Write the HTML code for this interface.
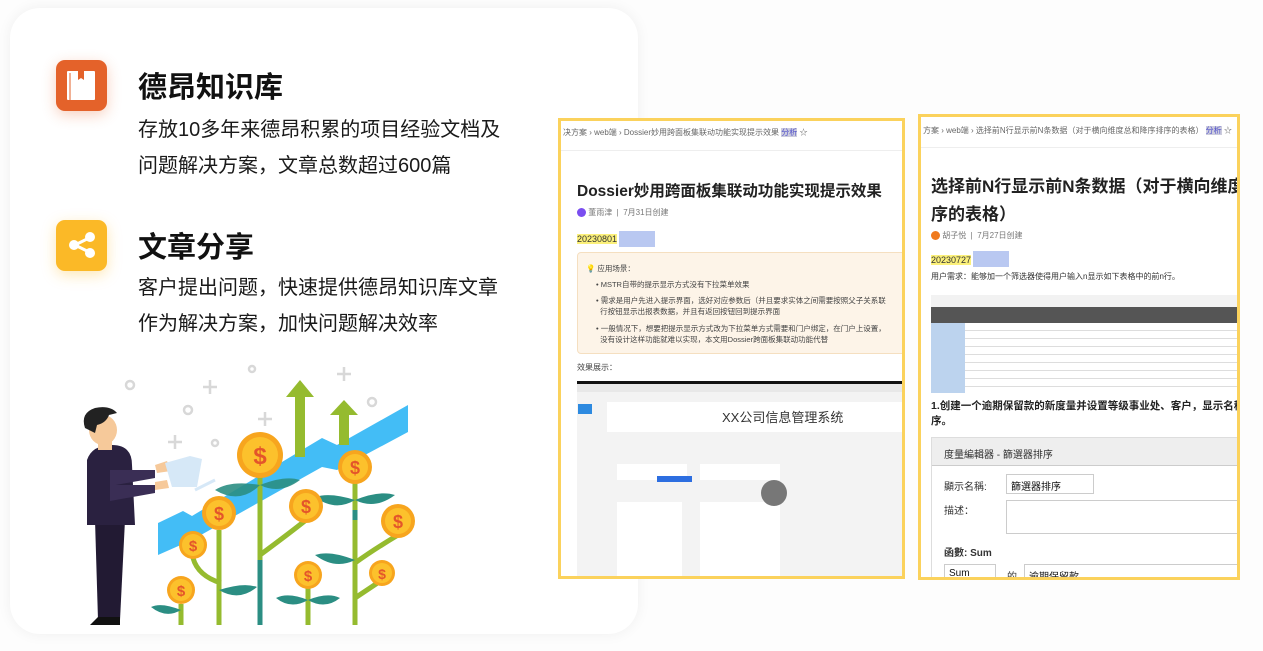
<!DOCTYPE html>
<html><head><meta charset="utf-8"><style>
*{margin:0;padding:0;box-sizing:border-box}
body{width:1263px;height:651px;background:#fdfdfd;font-family:"Liberation Sans","Noto Sans CJK SC",sans-serif;position:relative;overflow:hidden;color:#111}
.card{position:absolute;left:10px;top:8px;width:628px;height:626px;background:#fff;border-radius:30px;box-shadow:0 0 14px rgba(0,0,0,0.06)}
.ic{position:absolute;left:56px;width:51px;height:51px;border-radius:9px}
.h{position:absolute;left:138px;font-size:29px;font-weight:bold;letter-spacing:0px}
.p{position:absolute;left:138px;font-size:20px;line-height:36px;color:#1a1a1a}
.shot{position:absolute;border:3px solid #fbd25c;background:#fff;overflow:hidden;font-family:"Liberation Sans","Noto Sans CJK SC",sans-serif}
.s{position:absolute;white-space:nowrap}
</style></head><body>
<div class="card"></div>
<div class="ic" style="top:60px;background:#e4622a;box-shadow:0 4px 14px rgba(228,98,42,0.3)">
<svg width="51" height="51"><rect x="11" y="11" width="28" height="29" fill="#fff" rx="1"/><rect x="13" y="13" width="2" height="27" fill="#e4622a" opacity=".5"/><path d="M22 11v9l3-2 3 2v-9z" fill="#e4622a"/></svg></div>
<div class="h" style="top:64px">德昂知识库</div>
<div class="p" style="top:112px">存放10多年来德昂积累的项目经验文档及<br>问题解决方案，文章总数超过600篇</div>
<div class="ic" style="top:220px;background:#fbb927;box-shadow:0 4px 14px rgba(251,185,39,0.35)">
<svg width="51" height="51"><g fill="#fff" stroke="#fff" stroke-width="3"><line x1="19" y1="25" x2="33" y2="18"/><line x1="19" y1="25" x2="33" y2="32"/></g><circle cx="18" cy="25" r="5" fill="#fff"/><circle cx="34" cy="17" r="5" fill="#fff"/><circle cx="34" cy="33" r="5" fill="#fff"/></svg></div>
<div class="h" style="top:224px">文章分享</div>
<div class="p" style="top:270px">客户提出问题，快速提供德昂知识库文章<br>作为解决方案，加快问题解决效率</div>

<svg style="position:absolute;left:0;top:0" width="640" height="651">
<g fill="none" stroke="#d8d8d8" stroke-width="2.5">
<circle cx="130" cy="385" r="4"/><circle cx="188" cy="410" r="4"/><circle cx="215" cy="443" r="3"/><circle cx="252" cy="369" r="3"/><circle cx="372" cy="402" r="4"/>
<path d="M203 387h14M210 380v14M168 442h14M175 435v14M258 419h14M265 412v14M337 374h14M344 367v14"/></g>
<polygon points="158,523 183,511 192,516 322,438 337,445 408,405 408,432 337,470 322,467 192,540 158,555" fill="#43bdf6"/>
<path d="M300 380l-14 17h9v60h10v-60h9z" fill="#95bb2f"/>
<path d="M344 400l-14 15h9v30h10v-30h9z" fill="#95bb2f"/>
<g stroke="#95bb2f" stroke-width="5" fill="none">
<path d="M260 470V625M219 530V625M193 558q5 18 28 25M181 604V625M306 520q-15 12-46 35M355 480V625M398 535q-25 15-43 28M308 588V625M382 580q-12 8-27 18"/></g>
<g fill="#2b8e83"><path d="M260 485q-30-5-45 5q25 15 45-5zM260 485q25-10 40-5q-20 15-40 5z" opacity=".9"/>
<path d="M355 500q-25-8-40-3q20 15 40 3zM355 500q25-10 40-5q-20 15-40 5z"/>
<path d="M219 590q25-8 38-3q-18 15-38 3zM181 610q-20-8-30-3q15 12 30 3zM308 600q-20-8-32-2q15 12 32 2zM308 600q20-8 32-2q-15 12-32 2zM355 560q-25-10-40-5q20 15 40 5z"/></g>
<g stroke="#2b8e83" stroke-width="5"><path d="M260 560V625M355 510V520"/></g>
<g font-family="Liberation Sans" font-weight="bold" fill="#e4552a" text-anchor="middle">
<g><circle cx="260" cy="455" r="23" fill="#f7a51e"/><circle cx="260" cy="455" r="18" fill="#fcc12c"/><text x="260" y="464" font-size="24">$</text></g>
<g><circle cx="219" cy="513" r="17" fill="#f7a51e"/><circle cx="219" cy="513" r="13" fill="#fcc12c"/><text x="219" y="520" font-size="18">$</text></g>
<g><circle cx="193" cy="545" r="14" fill="#f7a51e"/><circle cx="193" cy="545" r="11" fill="#fcc12c"/><text x="193" y="551" font-size="15">$</text></g>
<g><circle cx="181" cy="590" r="14" fill="#f7a51e"/><circle cx="181" cy="590" r="11" fill="#fcc12c"/><text x="181" y="596" font-size="15">$</text></g>
<g><circle cx="306" cy="506" r="17" fill="#f7a51e"/><circle cx="306" cy="506" r="13" fill="#fcc12c"/><text x="306" y="513" font-size="18">$</text></g>
<g><circle cx="355" cy="467" r="17" fill="#f7a51e"/><circle cx="355" cy="467" r="13" fill="#fcc12c"/><text x="355" y="474" font-size="18">$</text></g>
<g><circle cx="398" cy="521" r="17" fill="#f7a51e"/><circle cx="398" cy="521" r="13" fill="#fcc12c"/><text x="398" y="528" font-size="18">$</text></g>
<g><circle cx="308" cy="575" r="14" fill="#f7a51e"/><circle cx="308" cy="575" r="11" fill="#fcc12c"/><text x="308" y="581" font-size="15">$</text></g>
<g><circle cx="382" cy="573" r="13" fill="#f7a51e"/><circle cx="382" cy="573" r="10" fill="#fcc12c"/><text x="382" y="579" font-size="14">$</text></g>
</g>
<path d="M95 520h30l-5 100h-22z" fill="#221a33"/>
<path d="M87 460q5-15 25-15q20 0 20 20l3 60h-48z" fill="#2a2140"/>
<path d="M110 470l45 0 0 8-45 8zM110 485l45 0 0 8-45 8z" fill="#3a2e55"/>
<path d="M155 465l12-4 4 10-14 2zM155 482l12-2 2 8-14 2z" fill="#f6c99a"/>
<path d="M165 463l25-7 12 3-5 28-25 0z" fill="#d6e8f7"/><path d="M195 490l20-10" stroke="#d6e8f7" stroke-width="3"/>
<rect x="98" y="438" width="14" height="12" fill="#f6c99a"/>
<ellipse cx="103" cy="430" rx="14" ry="15" fill="#f6c99a"/>
<path d="M85 428q-5-15 10-20q15-3 22 5l-8 2q-3 8-12 10l-2 8z" fill="#222"/>
<path d="M98 617h22v8h-30z" fill="#111"/>
</svg>

<div class="shot" style="left:558px;top:118px;width:347px;height:461px">
<div class="s" style="left:2px;top:6px;font-size:8px;color:#666">决方案 › web端 › Dossier妙用跨面板集联动功能实现提示效果 <span style="background:#ccd;color:#55c">分析</span> ☆</div>
<div style="position:absolute;left:0;top:29px;width:100%;border-top:1px solid #eee"></div>
<div class="s" style="left:16px;top:58px;font-size:15.5px;font-weight:bold;color:#222">Dossier妙用跨面板集联动功能实现提示效果</div>
<div class="s" style="left:16px;top:86px;font-size:8px;color:#777"><span style="display:inline-block;width:9px;height:9px;border-radius:50%;background:#7a4ef0;vertical-align:middle"></span> 董雨津 &nbsp;|&nbsp; 7月31日创建</div>
<div class="s" style="left:16px;top:113px;font-size:9px;background:#fbf07a;color:#333">20230801</div>
<div style="position:absolute;left:58px;top:110px;width:36px;height:16px;background:#b9c8f1"></div>
<div style="position:absolute;left:16px;top:131px;width:340px;height:102px;background:#fdf4e8;border:1px solid #f5dfc0;border-radius:4px;font-size:7.5px;color:#444">
<div class="s" style="left:8px;top:10px">💡 应用场景：</div>
<div class="s" style="left:18px;top:26px">• MSTR自带的提示显示方式没有下拉菜单效果</div>
<div class="s" style="left:18px;top:42px">• 需求是用户先进入提示界面，选好对应参数后（并且要求实体之间需要按照父子关系联<br>&nbsp;&nbsp;行按钮显示出报表数据，并且有返回按钮回到提示界面</div>
<div class="s" style="left:18px;top:70px">• 一般情况下，想要把提示显示方式改为下拉菜单方式需要和门户绑定，在门户上设置，<br>&nbsp;&nbsp;没有设计这样功能就难以实现，本文用Dossier跨面板集联动功能代替</div></div>
<div class="s" style="left:16px;top:241px;font-size:8px;color:#444">效果展示：</div>
<div style="position:absolute;left:16px;top:260px;width:340px;height:3px;background:#111"></div>
<div style="position:absolute;left:16px;top:263px;width:340px;height:200px;background:#f3f3f3">
<div style="position:absolute;left:0;top:0;width:100%;height:8px;background:#e8e8e8"></div>
<div style="position:absolute;left:1px;top:20px;width:14px;height:10px;background:#2d8ae0"></div>
<div style="position:absolute;left:30px;top:18px;width:310px;height:30px;background:#fff"></div>
<div class="s" style="left:145px;top:23px;font-size:13px;color:#333">XX公司信息管理系统</div>
<div style="position:absolute;left:40px;top:80px;width:70px;height:16px;background:#fff"></div>
<div style="position:absolute;left:80px;top:92px;width:35px;height:6px;background:#2d6ee0"></div>
<div style="position:absolute;left:123px;top:80px;width:80px;height:16px;background:#fff"></div>
<div style="position:absolute;left:40px;top:118px;width:65px;height:90px;background:#fff"></div>
<div style="position:absolute;left:123px;top:118px;width:80px;height:90px;background:#fff"></div>
<div style="position:absolute;left:184px;top:96px;width:26px;height:26px;border-radius:50%;background:#777"></div>
</div></div>

<div class="shot" style="left:918px;top:114px;width:322px;height:466px">
<div class="s" style="left:2px;top:8px;font-size:8px;color:#666">方案 › web端 › 选择前N行显示前N条数据（对于横向维度总和降序排序的表格） <span style="background:#ccd;color:#55c">分析</span> ☆</div>
<div style="position:absolute;left:0;top:30px;width:100%;border-top:1px solid #eee"></div>
<div class="s" style="left:10px;top:56px;font-size:17px;font-weight:bold;line-height:28px;color:#222">选择前N行显示前N条数据（对于横向维度总和降<br>序的表格）</div>
<div class="s" style="left:10px;top:113px;font-size:8px;color:#777"><span style="display:inline-block;width:9px;height:9px;border-radius:50%;background:#f07a1e;vertical-align:middle"></span> 胡子悦 &nbsp;|&nbsp; 7月27日创建</div>
<div class="s" style="left:10px;top:138px;font-size:9px;background:#fbf07a;color:#333">20230727</div>
<div style="position:absolute;left:52px;top:134px;width:36px;height:16px;background:#b9c8f1"></div>
<div class="s" style="left:10px;top:154px;font-size:8px;color:#333">用户需求：能够加一个筛选器使得用户输入n显示如下表格中的前n行。</div>
<div style="position:absolute;left:10px;top:178px;width:320px;height:98px;background:#f2f2f2;font-size:5px">
<div style="position:absolute;left:0;top:12px;width:100%;height:16px;background:#555"></div>
<div style="position:absolute;left:0;top:28px;width:34px;height:70px;background:#bcd3ee"></div>
<div style="position:absolute;left:34px;top:28px;width:290px;height:70px;background:repeating-linear-gradient(#fff 0,#fff 7px,#ddd 7px,#ddd 8px)"></div></div>
<div class="s" style="left:10px;top:282px;font-size:10.5px;font-weight:bold;line-height:15px;color:#222">1.创建一个逾期保留款的新度量并设置等级事业处、客户，显示名称<br>序。</div>
<div style="position:absolute;left:10px;top:320px;width:320px;height:150px;background:#fff;border:1px solid #ddd">
<div style="position:absolute;left:0;top:0;width:100%;height:28px;background:#eee;border-bottom:1px solid #ccc"></div>
<div class="s" style="left:12px;top:8px;font-size:10px;color:#333">度量編輯器 - 篩選器排序</div>
<div class="s" style="left:12px;top:40px;font-size:10px;color:#333">顯示名稱:</div>
<div style="position:absolute;left:74px;top:36px;width:88px;height:20px;border:1px solid #ccc;font-size:10px;padding:3px 4px">篩選器排序</div>
<div class="s" style="left:12px;top:64px;font-size:10px;color:#333">描述：</div>
<div style="position:absolute;left:74px;top:62px;width:240px;height:34px;border:1px solid #ccc"></div>
<div class="s" style="left:12px;top:106px;font-size:10px;font-weight:bold;color:#333">函數: Sum</div>
<div style="position:absolute;left:12px;top:126px;width:52px;height:20px;border:1px solid #ccc;font-size:10px;padding:3px 4px">Sum</div>
<div class="s" style="left:75px;top:130px;font-size:10px;color:#333">的</div>
<div style="position:absolute;left:92px;top:126px;width:220px;height:20px;border:1px solid #ccc;font-size:10px;padding:3px 4px">逾期保留款</div>
</div></div>
</body></html>
